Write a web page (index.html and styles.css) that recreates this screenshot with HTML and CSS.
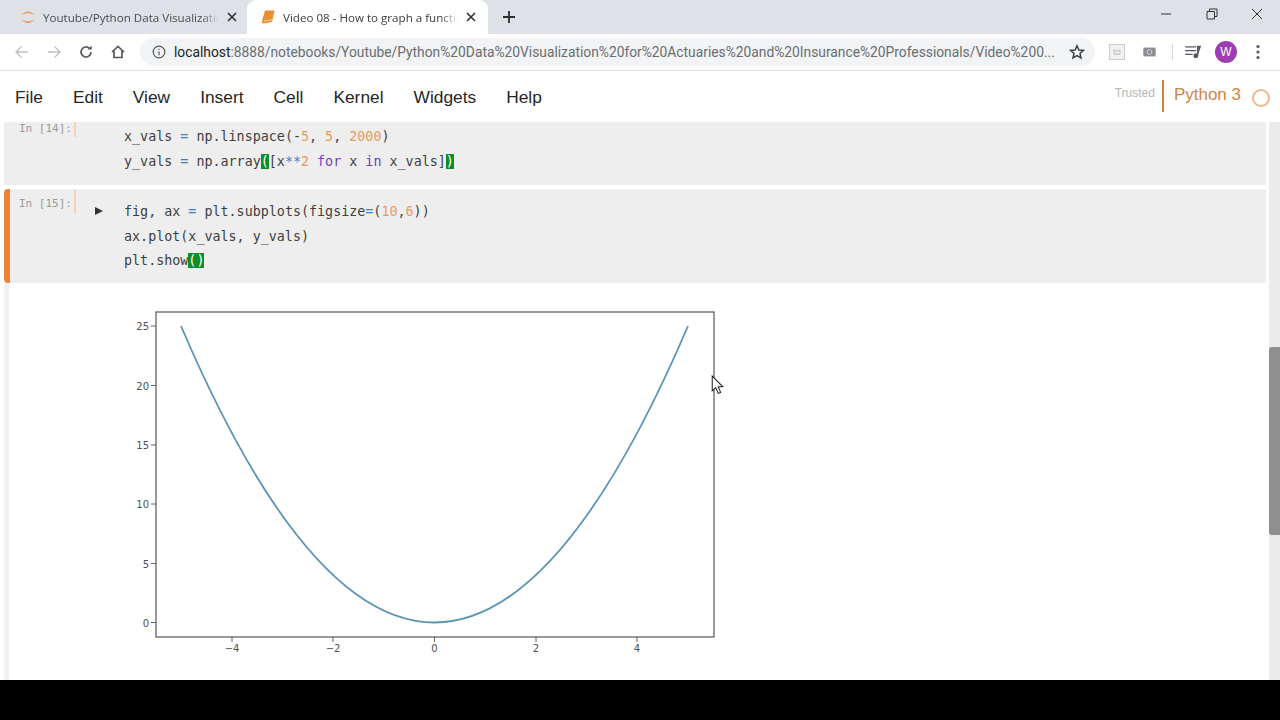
FILE: index.html
```html
<!DOCTYPE html>
<html lang="en">
<head>
<meta charset="utf-8">
<title>Video 08 - How to graph a function</title>
<link rel="stylesheet" href="styles.css">
</head>
<body>
<div class="app">
  <header class="tabstrip">
    <div class="tab">
      <svg class="favicon" viewBox="0 0 16 16"><path d="M1.500 6.500 C4 1 12 1 14.500 6.500 C11.500 3.600 4.500 3.600 1.500 6.500 Z" class="arc"/><path d="M1.500 10 C4.500 13 11.500 13 14.500 10 C12 15.500 4 15.500 1.500 10 Z" class="arc"/></svg>
      <span class="tab-title">Youtube/Python Data Visualization for Actuaries</span>
      <svg class="tab-close" viewBox="0 0 10 10"><path d="M1 1 L9 9 M9 1 L1 9"/></svg>
    </div>
    <div class="tab tab-active">
      <svg class="favicon" viewBox="0 0 16 16"><path d="M5 1.500 H14.500 L12 13 L3.500 14.500 Q1.500 14.500 2 12 Z" class="book"/><path d="M3.500 12 L12 11" class="book-line"/></svg>
      <span class="tab-title">Video 08 - How to graph a function in Python</span>
      <svg class="tab-close" viewBox="0 0 10 10"><path d="M1 1 L9 9 M9 1 L1 9"/></svg>
    </div>
    <svg class="newtab" viewBox="0 0 12 12"><path d="M6 0 V12 M0 6 H12"/></svg>
    <div class="window-controls">
      <svg viewBox="0 0 12 12"><path d="M1 6 H11"/></svg>
      <svg viewBox="0 0 12 12"><path d="M1 3.500 H8.500 V11 H1 Z M3.500 3.500 V1 H11 V8.500 H8.500"/></svg>
      <svg viewBox="0 0 12 12"><path d="M1 1 L11 11 M11 1 L1 11"/></svg>
    </div>
  </header>

  <nav class="toolbar">
    <svg class="tool tool-muted" viewBox="0 0 16 16"><path d="M14 8 H2 M7.500 2.500 L2 8 L7.500 13.500"/></svg>
    <svg class="tool tool-muted" viewBox="0 0 16 16"><path d="M2 8 H14 M8.500 2.500 L14 8 L8.500 13.500"/></svg>
    <svg class="tool" viewBox="0 0 16 16"><path d="M13 8 A5 5 0 1 1 11.400 4.300"/><path d="M13.600 1.600 V5.600 H9.600" class="solid"/></svg>
    <svg class="tool" viewBox="0 0 16 16"><path d="M2 8 L8 2.300 L14 8 M4 6.800 V13.500 H12 V6.800"/></svg>
    <div class="omnibox">
      <svg class="info" viewBox="0 0 14 14"><circle cx="7" cy="7" r="5.800"/><path d="M7 6.200 V10.200 M7 3.800 V5"/></svg>
      <span class="url"><span class="host">localhost</span>:8888/notebooks/Youtube/Python%20Data%20Visualization%20for%20Actuaries%20and%20Insurance%20Professionals/Video%200...</span>
      <svg class="star" viewBox="0 0 16 16"><path d="M8 1.800 L9.900 6 L14.400 6.400 L11 9.400 L12 13.900 L8 11.600 L4 13.900 L5 9.400 L1.600 6.400 L6.100 6 Z"/></svg>
    </div>
    <div class="extensions">
      <svg class="ext-box" viewBox="0 0 16 16"><rect x="0.500" y="0.500" width="15" height="15"/><path d="M5 5 V10.500 H11 V5 L9.500 6.500 H6.500 Z"/></svg>
      <svg class="ext-cam" viewBox="0 0 14 10"><rect width="14" height="10" rx="2"/><circle cx="7" cy="5" r="2.600"/></svg>
      <span class="sep"></span>
      <svg class="ext-queue" viewBox="0 0 18 14"><path d="M0 2 H12 M0 6 H12 M0 10 H8 M13.500 11.500 V1.500 H17"/><circle cx="11.500" cy="11.500" r="2"/></svg>
      <span class="avatar">W</span>
      <svg class="kebab" viewBox="0 0 4 16"><circle cx="2" cy="2.500" r="1.600"/><circle cx="2" cy="8" r="1.600"/><circle cx="2" cy="13.500" r="1.600"/></svg>
    </div>
  </nav>

  <div class="menubar">
    <ul class="menu">
      <li>File</li><li>Edit</li><li>View</li><li>Insert</li><li>Cell</li><li>Kernel</li><li>Widgets</li><li>Help</li>
    </ul>
    <div class="kernel-info">
      <span class="trusted">Trusted</span>
      <span class="kernel-name">Python 3</span>
      <span class="kernel-dot"></span>
    </div>
  </div>

  <main class="notebook">
    <div class="cells">
      <section class="cell cell-first">
        <div class="prompt">In [14]:</div>
        <div class="run-slot"></div>
        <pre class="code">x_vals <b class="op">=</b> np.linspace(-<i class="num">5</i>, <i class="num">5</i>, <i class="num">2000</i>)
y_vals <b class="op">=</b> np.array<mark>(</mark>[x<b class="op">**</b><i class="num">2</i> <b class="kw">for</b> x <b class="kw">in</b> x_vals]<mark>)</mark></pre>
      </section>
      <section class="cell cell-selected">
        <div class="prompt">In [15]:</div>
        <div class="run-slot"><svg class="run" viewBox="0 0 8 8"><path d="M0 0 L8 4 L0 8 Z"/></svg></div>
        <pre class="code">fig, ax <b class="op">=</b> plt.subplots(figsize<b class="op">=</b>(<i class="num">10</i>,<i class="num">6</i>))
ax.plot(x_vals, y_vals)
plt.show<mark>()</mark></pre>
      </section>
      <section class="output">
        <svg class="plot" viewBox="0 0 600 380" width="600" height="380">
          <g class="ticks">
            <path d="M31 29 H36 M31 88.500 H36 M31 148 H36 M31 207 H36 M31 266.500 H36 M31 325.500 H36"/>
            <path d="M112 340 V345 M213 340 V345 M314.500 340 V345 M416 340 V345 M517 340 V345"/>
          </g>
          <path class="curve" d="M61 29 Q314.500 622 568 29"/>
          <rect class="frame" x="36" y="15" width="558" height="325"/>
          <g class="ylabels">
            <text x="29" y="33">25</text>
            <text x="29" y="92.500">20</text>
            <text x="29" y="152">15</text>
            <text x="29" y="211">10</text>
            <text x="29" y="270.500">5</text>
            <text x="29" y="329.500">0</text>
          </g>
          <g class="xlabels">
            <text x="112" y="355">−4</text>
            <text x="213" y="355">−2</text>
            <text x="314.500" y="355">0</text>
            <text x="416" y="355">2</text>
            <text x="517" y="355">4</text>
          </g>
        </svg>
        <svg class="cursor" viewBox="0 0 12 19"><path d="M1 1 V15 L4.300 12 L6.700 17.500 L9 16.500 L6.700 11.300 L11 11 Z"/></svg>
      </section>
    </div>
    <div class="scrollbar"><div class="scroll-thumb"></div></div>
  </main>

  <div class="letterbox"></div>
</div>
</body>
</html>
```
FILE: styles.css
```css
* { box-sizing: border-box; }
html, body { margin: 0; height: 100%; overflow: hidden; background: #fff; }
.app { width: 1280px; height: 720px; display: flex; flex-direction: column; font-family: "Liberation Sans", Arial, sans-serif; }

/* tab strip */
.tabstrip { height: 34px; flex: none; background: #dee1e6; display: flex; align-items: flex-end; padding-left: 8px; }
.tab { width: 239px; height: 34px; display: flex; align-items: center; padding: 0 10px 0 12px; flex: none; }
.tab-active { width: 241px; background: #fff; border-radius: 9px 9px 0 0; padding: 0 12px 0 13px; }
.favicon { width: 16px; height: 16px; flex: none; fill: none; }
.arc { fill: #e9a06c; }
.book { fill: #ea8f2e; }
.book-line { stroke: #f8d6a8; stroke-width: 1.200; }
.tab-title { flex: 1; min-width: 0; margin-left: 7px; font: 11.600px "Open Sans", sans-serif; color: #4a4c50; white-space: nowrap; overflow: hidden; -webkit-mask-image: linear-gradient(to right, #000 90%, transparent 100%); mask-image: linear-gradient(to right, #000 90%, transparent 100%); }
.tab-active .tab-title { color: #3c4043; }
.tab-close { width: 10px; height: 10px; flex: none; margin-left: 8px; stroke: #2f3134; stroke-width: 1.600; fill: none; }
.newtab { width: 12px; height: 12px; margin: 0 0 11px 15px; stroke: #2b2d30; stroke-width: 1.800; fill: none; flex: none; }
.window-controls { margin-left: auto; height: 34px; display: flex; align-items: center; gap: 33.500px; padding: 0 17px 6px 0; }
.window-controls svg { width: 12px; height: 12px; fill: none; stroke: #30323a; stroke-width: 1; }

/* toolbar */
.toolbar { height: 37px; flex: none; background: #fff; border-bottom: 1px solid #dadce0; display: flex; align-items: center; padding: 0 0 1px 14px; }
.tool { width: 16px; height: 16px; margin-right: 16px; flex: none; fill: none; stroke: #55585c; stroke-width: 1.700; }
.tool-muted { stroke: #bcbfc4; stroke-width: 1.300; }
.tool .solid { fill: #55585c; stroke: none; }
.omnibox { width: 955px; height: 28px; margin-left: -2px; background: #f1f3f4; border-radius: 14px; display: flex; align-items: center; padding: 0 10px 0 12px; flex: none; }
.info { width: 14px; height: 14px; flex: none; fill: none; stroke: #55585c; stroke-width: 1.200; }
.url { margin-left: 8px; font: 13.800px Roboto, sans-serif; color: #6a6d72; white-space: nowrap; flex: 1; min-width: 0; overflow: hidden; }
.host { color: #202124; }
.star { width: 16px; height: 16px; flex: none; fill: none; stroke: #3c4043; stroke-width: 1.500; }
.extensions { flex: 1; display: flex; align-items: center; padding-left: 14px; }
.ext-box { width: 16px; height: 16px; flex: none; fill: #f0f1f2; stroke: #c9ccd0; stroke-width: 1; }
.ext-box path { fill: #e2e3e5; stroke: #c4c6c9; }
.ext-cam { width: 13px; height: 10px; flex: none; margin-left: 17.500px; fill: #8a8d91; stroke: #e6e7e9; stroke-width: 0.800; }
.sep { width: 1px; height: 16px; background: #d6d8db; margin-left: 16px; flex: none; }
.ext-queue { width: 17px; height: 13px; flex: none; margin-left: 12px; fill: #55585c; stroke: #55585c; stroke-width: 1.300; }
.avatar { width: 22px; height: 22px; margin-left: 13.500px; border-radius: 50%; background: #9c3db0; color: #fff; font-size: 12px; display: flex; align-items: center; justify-content: center; flex: none; }
.kebab { width: 4px; height: 16px; margin-left: 19px; fill: #55585c; flex: none; }

/* notebook menu */
.menubar { height: 51px; flex: none; background: #fff; display: flex; align-items: center; padding: 0 10px 0 15px; }
.menu { list-style: none; margin: 0; padding: 1px 0 0; display: flex; gap: 30px; font-size: 17.350px; color: #262626; }
.kernel-info { margin-left: auto; height: 32px; display: flex; align-items: center; margin-top: -1px; }
.trusted { font-size: 12px; color: #b5b5b5; padding-right: 7px; margin-top: -6px; }
.kernel-name { height: 32px; border-left: 2px solid #d9803a; padding-left: 10px; font-size: 17px; line-height: 30px; color: #d0843f; }
.kernel-dot { width: 18px; height: 18px; margin-left: 11px; margin-top: 4px; border: 2px solid #e8b98e; border-radius: 50%; }

/* notebook body */
.notebook { flex: 1; min-height: 0; display: flex; background: #fff; overflow: hidden; }
.cells { flex: 1; min-width: 0; display: flex; flex-direction: column; padding: 0 3px 0 4px; position: relative; }
.scrollbar { width: 11px; flex: none; background: #ebebeb; padding-top: 225px; }
.scroll-thumb { height: 188px; background: #8f8f8f; border-radius: 3px 0 0 3px; }
.cell { display: flex; background: #eee; flex: none; border-radius: 2px; }
.cell-first { height: 63px; padding-left: 6px; }
.cell-selected { height: 94px; margin-top: 4px; border-left: 6px solid #ee8136; border-radius: 4px 2px 2px 4px; }
.prompt { width: 66px; flex: none; height: 15px; padding-left: 9px; border-right: 2px solid #f3d3b4; font: 11px/14px "DejaVu Sans Mono", monospace; color: #9a9a9a; white-space: nowrap; }
.cell-selected .prompt { height: 23px; margin-top: 1px; padding-top: 7px; }
.run-slot { width: 48px; flex: none; position: relative; }
.run { position: absolute; left: 19px; top: 18px; width: 8px; height: 8px; fill: #333; }
.code { margin: 0; padding-top: 3px; font: 13.370px/24.700px "DejaVu Sans Mono", monospace; color: #3f3f3f; }
.cell-selected .code { padding-top: 11px; }
.code b, .code i { font-weight: normal; font-style: normal; }
.op { color: #3d7fc0; }
.num { color: #ea9a5c; }
.kw { color: #6a3fc0; }
mark { background: #0d8f28; color: #fff; }

/* output */
.output { flex: 1; position: relative; border-left: 5px solid #f1f1f1; padding: 14px 0 0 111px; overflow: hidden; }
.plot { display: block; }
.frame { fill: none; stroke: #555; stroke-width: 1.200; }
.curve { fill: none; stroke: #5a93b4; stroke-width: 1.800; }
.ticks path { stroke: #666; stroke-width: 1; fill: none; }
.plot text { font: 10px "DejaVu Sans", sans-serif; fill: #505050; }
.ylabels text { text-anchor: end; }
.xlabels text { text-anchor: middle; }
.cursor { position: absolute; left: 702px; top: 92px; width: 13px; height: 20px; fill: #fff; stroke: #222; stroke-width: 1; }

.letterbox { height: 40px; flex: none; background: #000; }
```
